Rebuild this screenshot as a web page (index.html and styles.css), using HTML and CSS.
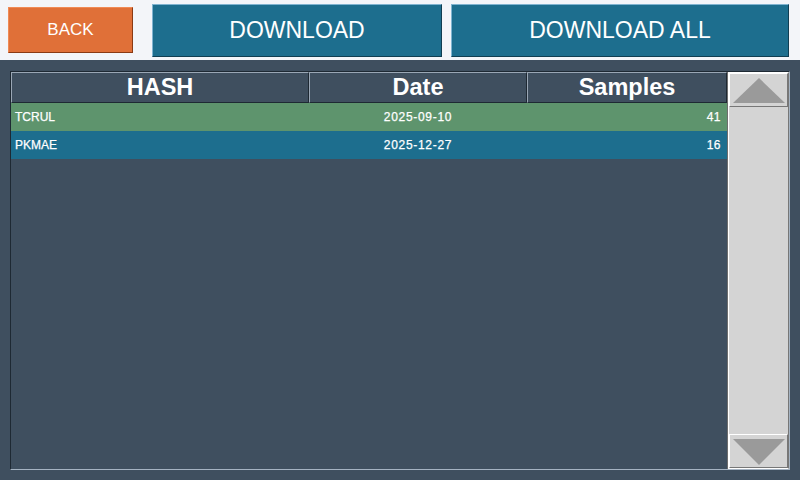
FILE: index.html
```html
<!DOCTYPE html>
<html lang="en">
<head>
    <meta charset="UTF-8">
    <meta name="viewport" content="width=device-width, initial-scale=1.0">
    <title>Samples</title>
    <link rel="stylesheet" href="styles.css">
</head>
<body>
    <div class="topbar">
        <button class="btn btn-back">BACK</button>
        <button class="btn btn-dl">DOWNLOAD</button>
        <button class="btn btn-dl btn-all">DOWNLOAD ALL</button>
    </div>
    <div class="panel">
        <div class="frame">
            <div class="table">
                <div class="head">
                    <div class="hcell c-hash">HASH</div>
                    <div class="hcell c-date">Date</div>
                    <div class="hcell c-samples">Samples</div>
                </div>
                <div class="row row-green">
                    <div class="cell c-hash">TCRUL</div>
                    <div class="cell c-date">2025-09-10</div>
                    <div class="cell c-samples">41</div>
                </div>
                <div class="row row-blue">
                    <div class="cell c-hash">PKMAE</div>
                    <div class="cell c-date">2025-12-27</div>
                    <div class="cell c-samples">16</div>
                </div>
            </div>
            <div class="scrollbar">
                <div class="sbtn">
                    <svg width="56" height="28" viewBox="0 0 56 28"><polygon points="2,27 28,2 54,27" fill="#9a9a9a"/></svg>
                </div>
                <div class="track"></div>
                <div class="sbtn">
                    <svg width="56" height="28" viewBox="0 0 56 28"><polygon points="2,2 54,2 28,28" fill="#9a9a9a"/></svg>
                </div>
            </div>
        </div>
    </div>
</body>
</html>
```

FILE: styles.css
```css
body {
    margin: 0;
    padding: 0;
    width: 800px;
    height: 480px;
    overflow: hidden;
    background: #f3f5f9;
    font-family: "Liberation Sans", Arial, sans-serif;
}
.topbar {
    height: 60px;
    display: flex;
    align-items: flex-start;
    box-sizing: border-box;
}
.btn {
    font-family: "Liberation Sans", Arial, sans-serif;
    color: #fff;
    padding: 0;
    cursor: pointer;
    box-sizing: border-box;
}
.btn-back {
    margin: 7px 0 0 8px;
    width: 125px;
    height: 46px;
    background: #e07038;
    border: 1px solid #f08a55;
    border-right-color: #8a3a14;
    border-bottom-color: #8a3a14;
    font-size: 17px;
}
.btn-dl {
    margin: 4px 0 0 19px;
    width: 290px;
    height: 53px;
    background: #1d6e8e;
    border: 1px solid #7fb3d0;
    border-right-color: #103e52;
    border-bottom-color: #103e52;
    font-size: 23px;
}
.btn-all {
    margin-left: 9px;
    width: 338px;
}
.panel {
    height: 420px;
    background: #3f4f5f;
    padding: 11px 10px 10px 10px;
    box-sizing: border-box;
}
.frame {
    height: 100%;
    display: flex;
    border: 1px solid #1e2933;
    border-right-color: #a5b3c2;
    border-bottom-color: #a5b3c2;
    box-sizing: border-box;
}
.table {
    flex: 1;
    border-right: 1px solid #6e6e6e;
}
.head {
    display: flex;
    height: 31px;
}
.hcell {
    box-sizing: border-box;
    border: 1px solid #9aa7b5;
    border-right-color: #1e2933;
    border-bottom-color: #1e2933;
    color: #fff;
    font-weight: bold;
    font-size: 23.5px;
    text-align: center;
    line-height: 29px;
}
.c-hash {
    width: 298px;
}
.c-date {
    width: 218px;
}
.c-samples {
    flex: 1;
}
.row {
    display: flex;
    height: 28px;
    align-items: center;
    color: #fff;
    font-size: 12px;
    -webkit-text-stroke: 0.25px #fff;
}
.row-green {
    background: #5e946d;
}
.row-blue {
    background: #1d6e8e;
}
.cell.c-hash {
    padding-left: 4px;
    box-sizing: border-box;
}
.cell.c-date {
    text-align: center;
    letter-spacing: 0.7px;
}
.cell.c-samples {
    text-align: right;
    padding-right: 6px;
    letter-spacing: 0.5px;
}
.scrollbar {
    width: 61px;
    display: flex;
    flex-direction: column;
    background: #d4d4d4;
    border: 1px solid #fff;
    border-right-color: #777;
    box-sizing: border-box;
}
.sbtn {
    height: 32px;
    display: flex;
    align-items: center;
    justify-content: center;
    border: 1px solid #fff;
    border-right-color: #777;
    border-bottom-color: #777;
}
.track {
    flex: 1;
}
```
